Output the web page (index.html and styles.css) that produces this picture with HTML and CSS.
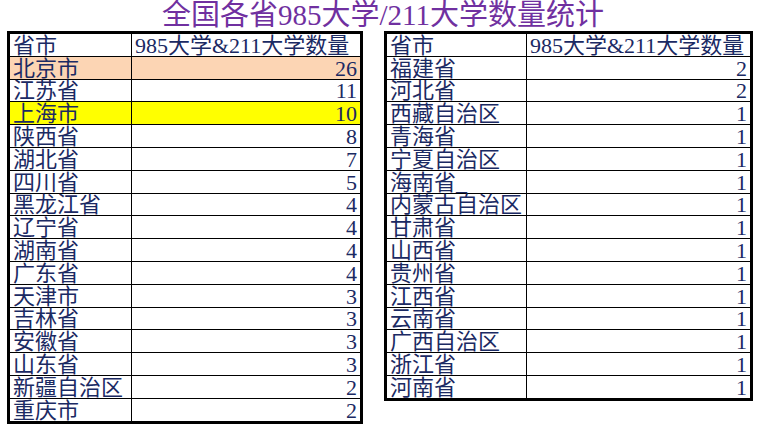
FILE: index.html
```html
<!DOCTYPE html>
<html lang="zh-CN">
<head>
<meta charset="utf-8">
<title>全国各省985大学/211大学数量统计</title>
<link rel="stylesheet" href="styles.css">
</head>
<body>
<h1 class="title">全国各省985大学/211大学数量统计</h1>
<div class="tables">
  <table class="sheet sheet-left">
    <colgroup><col class="c-name-l"><col class="c-num-l"></colgroup>
    <tr class="head"><td>省市</td><td>985大学&amp;211大学数量</td></tr>
    <tr class="peach"><td>北京市</td><td class="num">26</td></tr>
    <tr><td>江苏省</td><td class="num">11</td></tr>
    <tr class="yellow"><td>上海市</td><td class="num">10</td></tr>
    <tr><td>陕西省</td><td class="num">8</td></tr>
    <tr><td>湖北省</td><td class="num">7</td></tr>
    <tr><td>四川省</td><td class="num">5</td></tr>
    <tr><td>黑龙江省</td><td class="num">4</td></tr>
    <tr><td>辽宁省</td><td class="num">4</td></tr>
    <tr><td>湖南省</td><td class="num">4</td></tr>
    <tr><td>广东省</td><td class="num">4</td></tr>
    <tr><td>天津市</td><td class="num">3</td></tr>
    <tr><td>吉林省</td><td class="num">3</td></tr>
    <tr><td>安徽省</td><td class="num">3</td></tr>
    <tr><td>山东省</td><td class="num">3</td></tr>
    <tr><td>新疆自治区</td><td class="num">2</td></tr>
    <tr><td>重庆市</td><td class="num">2</td></tr>
  </table>
  <table class="sheet sheet-right">
    <colgroup><col class="c-name-r"><col class="c-num-r"></colgroup>
    <tr class="head"><td>省市</td><td>985大学&amp;211大学数量</td></tr>
    <tr><td>福建省</td><td class="num">2</td></tr>
    <tr><td>河北省</td><td class="num">2</td></tr>
    <tr><td>西藏自治区</td><td class="num">1</td></tr>
    <tr><td>青海省</td><td class="num">1</td></tr>
    <tr><td>宁夏自治区</td><td class="num">1</td></tr>
    <tr><td>海南省_</td><td class="num">1</td></tr>
    <tr><td>内蒙古自治区</td><td class="num">1</td></tr>
    <tr><td>甘肃省</td><td class="num">1</td></tr>
    <tr><td>山西省</td><td class="num">1</td></tr>
    <tr><td>贵州省</td><td class="num">1</td></tr>
    <tr><td>江西省</td><td class="num">1</td></tr>
    <tr><td>云南省</td><td class="num">1</td></tr>
    <tr><td>广西自治区</td><td class="num">1</td></tr>
    <tr><td>浙江省</td><td class="num">1</td></tr>
    <tr><td>河南省</td><td class="num">1</td></tr>
  </table>
</div>
</body>
</html>
```

FILE: styles.css
```css
html, body {
  margin: 0;
  padding: 0;
  background: #ffffff;
}

body {
  width: 762px;
  height: 432px;
  overflow: hidden;
  font-family: "Liberation Serif", "Noto Sans CJK SC", serif;
  color: #1b2a63;
}

.title {
  margin: 0;
  height: 31px;
  font-size: 29px;
  line-height: 31px;
  font-weight: normal;
  text-align: center;
  color: #7030a0;
  padding-left: 4px;
}

.tables {
  display: flex;
  align-items: flex-start;
  gap: 21px;
  padding-left: 7px;
}

.sheet {
  border-collapse: collapse;
  table-layout: fixed;
  border: 3px solid #000000;
  font-size: 22px;
}

.sheet td {
  border: 1px solid #000000;
  height: 18.8px;
  padding: 0 3px 3px 3px;
  line-height: 14px;
  white-space: nowrap;
  vertical-align: bottom;
}

.sheet .num {
  text-align: right;
  font-size: 22px;
}

.c-name-l { width: 123px; }
.c-num-l { width: 230px; }
.c-name-r { width: 141px; }
.c-num-r { width: 225px; }

.sheet-left { width: 354px; }
.sheet-right { width: 367px; }

.peach td { background: #fcd5b4; }
.yellow td { background: #ffff00; }
```
